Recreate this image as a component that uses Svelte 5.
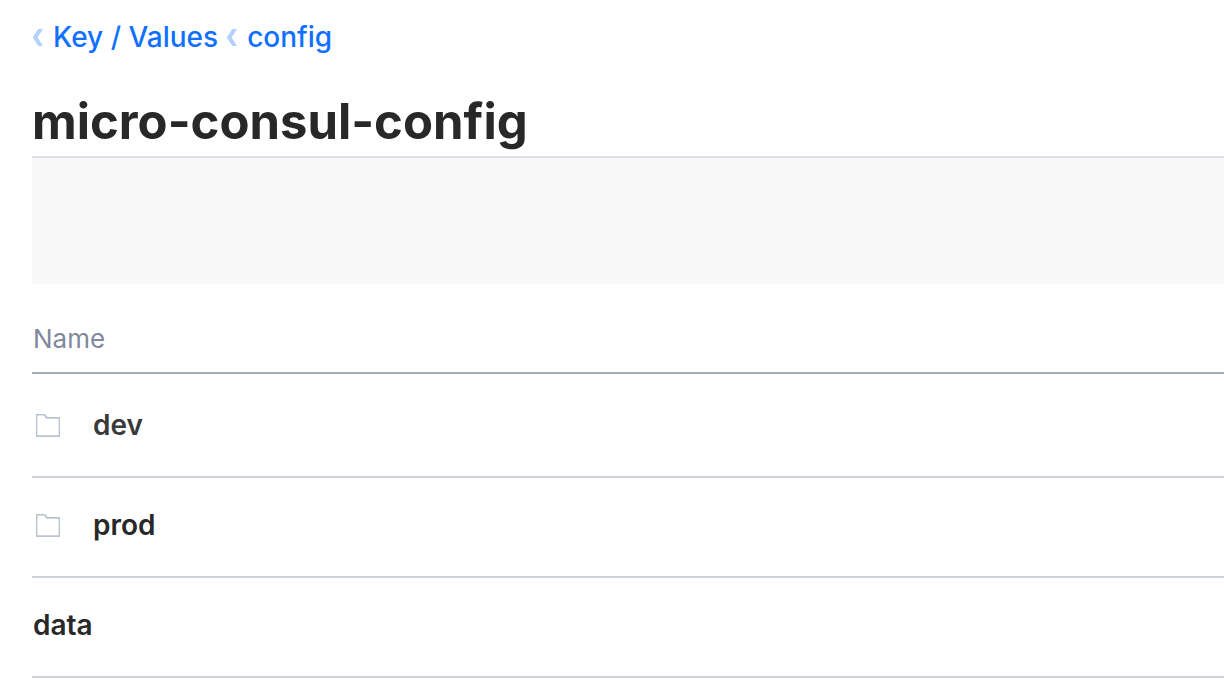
<script>
  const crumbs = ['Key / Values', 'config'];
  const rows = [
    { name: 'dev', folder: true },
    { name: 'prod', folder: true },
    { name: 'data', folder: false }
  ];
</script>

<main>
  <nav aria-label="Breadcrumb">
    {#each crumbs as crumb}
      <a href="#top">
        <svg width="11" height="18" viewBox="0 0 11 18" aria-hidden="true">
          <path d="M6.2 1H11L5.6 9.5L11 18H6.2L0.8 9.5Z" fill="#b3d1ff" />
        </svg>{crumb}
      </a>
    {/each}
  </nav>
  <h1>micro-consul-config</h1>
  <div class="toolbar"></div>
  <table>
    <thead>
      <tr><th scope="col">Name</th></tr>
    </thead>
    <tbody>
      {#each rows as row}
        <tr class:soft={row.name === 'dev'}>
          <td>
            <a href="#{row.name}">
              {#if row.folder}
                <svg width="24" height="23" viewBox="0 0 24 23" aria-hidden="true">
                  <path fill-rule="evenodd" d="M0 0H9L11.5 3H24V23H0ZM1.4 1.4V21.2H22.6V4.8H10.4L8 1.4Z" fill="#b8c4d4" />
                </svg>
              {/if}
              <span>{row.name}</span>
            </a>
          </td>
        </tr>
      {/each}
    </tbody>
  </table>
</main>

<style>
  :global(body) { margin: 0; background: #fff; }
  main { padding: 17px 0 8px 32px; font-family: Inter, "Liberation Sans", sans-serif; color: #282828; }
  nav { display: flex; gap: 8px; height: 40px; }
  nav a { display: flex; align-items: center; gap: 10px; color: #1070ff; font-size: 28px; font-weight: 500; line-height: 40px; text-decoration: none; }
  h1 { margin: 31px 0 0; font-size: 49px; font-weight: 700; line-height: 68px; }
  .toolbar { height: 126px; border-top: 2px solid #dce0e6; background: #f9f9f9; }
  table { width: 100%; border-collapse: separate; border-spacing: 0; }
  th, td { box-sizing: border-box; text-align: left; }
  th { height: 90px; padding: 20px 0 0 1px; border-bottom: 2px solid #a2adb7; color: #7f899b; font-size: 26px; font-weight: 400; }
  td { height: 100px; padding: 0 0 4px 1px; border-bottom: 2px solid #ced3d9; }
  td a { display: flex; align-items: center; color: #282828; font-size: 28px; font-weight: 600; line-height: 40px; text-decoration: none; }
  td svg { margin: 0 33px 0 3px; }
  .soft td { height: 104px; padding-bottom: 0; }
  .soft a { color: #393939; }
</style>
